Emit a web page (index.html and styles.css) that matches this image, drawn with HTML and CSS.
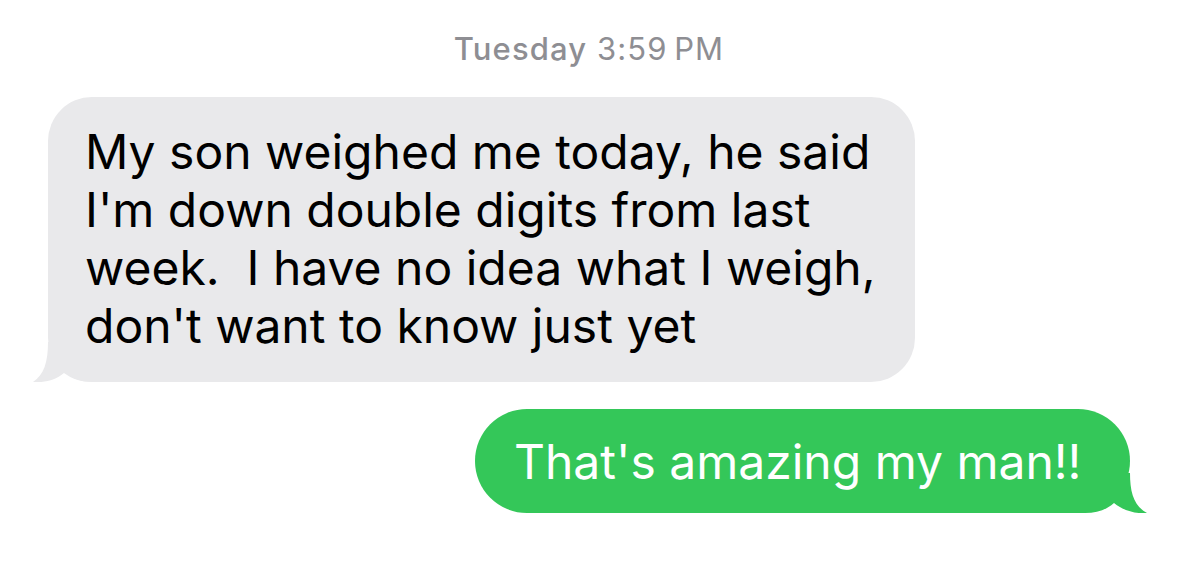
FILE: index.html
```html
<!DOCTYPE html>
<html lang="en">
<head>
  <meta charset="UTF-8">
  <meta name="viewport" content="width=device-width, initial-scale=1.0">
  <title>Messages</title>
  <link rel="stylesheet" href="styles.css">
</head>
<body>
  <div class="thread">
    <div class="timestamp"><span class="day">Tuesday</span> 3:59&#8239;PM</div>

    <div class="bubble received">
      <p>My son weighed me today, he said<br>I'm down double digits from last<br>week.&nbsp; I have no idea what I weigh,<br>don't want to know just yet</p>
      <svg class="tail" viewBox="0 0 80 40" width="80" height="40">
        <path d="M15 0 C15 20 11 33 0 40 C11 41 23 38 31 31 C39 37 48 40 60 40 L80 40 L80 0 Z"></path>
      </svg>
    </div>

    <div class="bubble sent">
      <p>That's amazing my man!!</p>
      <svg class="tail" viewBox="0 0 80 40" width="80" height="40">
        <path d="M17 0 C17 20 13 33 0 40 C11 41 23 38 33 30 C41 37 50 40 62 40 L80 40 L80 0 Z"></path>
      </svg>
    </div>
  </div>
</body>
</html>
```

FILE: styles.css
```css
body {
  margin: 0;
  background: #fff;
  font-family: Inter, "Noto Sans", Arial, sans-serif;
}
.thread {
  display: flex;
  flex-direction: column;
  padding: 30px 49px 0 48px;
}
.timestamp {
  text-align: center;
  color: #8e8e93;
  font-size: 31px;
  line-height: 38px;
  letter-spacing: 1.1px;
  margin-bottom: 29px;
}
.timestamp .day {
  font-weight: 500;
}
.bubble {
  position: relative;
  box-sizing: border-box;
}
.bubble p {
  margin: 0;
  white-space: nowrap;
  position: relative;
  z-index: 1;
}
.bubble .tail {
  position: absolute;
  bottom: 0;
}
.received {
  align-self: flex-start;
  width: 867px;
  background: #e9e9eb;
  color: #000;
  border-radius: 44px;
  padding: 26px 37px 27px;
  font-size: 48px;
  line-height: 58px;
}
.received .tail {
  left: -15px;
  fill: #e9e9eb;
}
.sent {
  align-self: flex-end;
  margin-top: 27px;
  width: 655px;
  height: 104px;
  background: #34c759;
  color: #fff;
  border-radius: 52px;
  padding: 0 39px;
  display: flex;
  align-items: center;
  font-size: 48px;
}
.sent .tail {
  right: -17px;
  fill: #34c759;
  transform: scaleX(-1);
}
```
